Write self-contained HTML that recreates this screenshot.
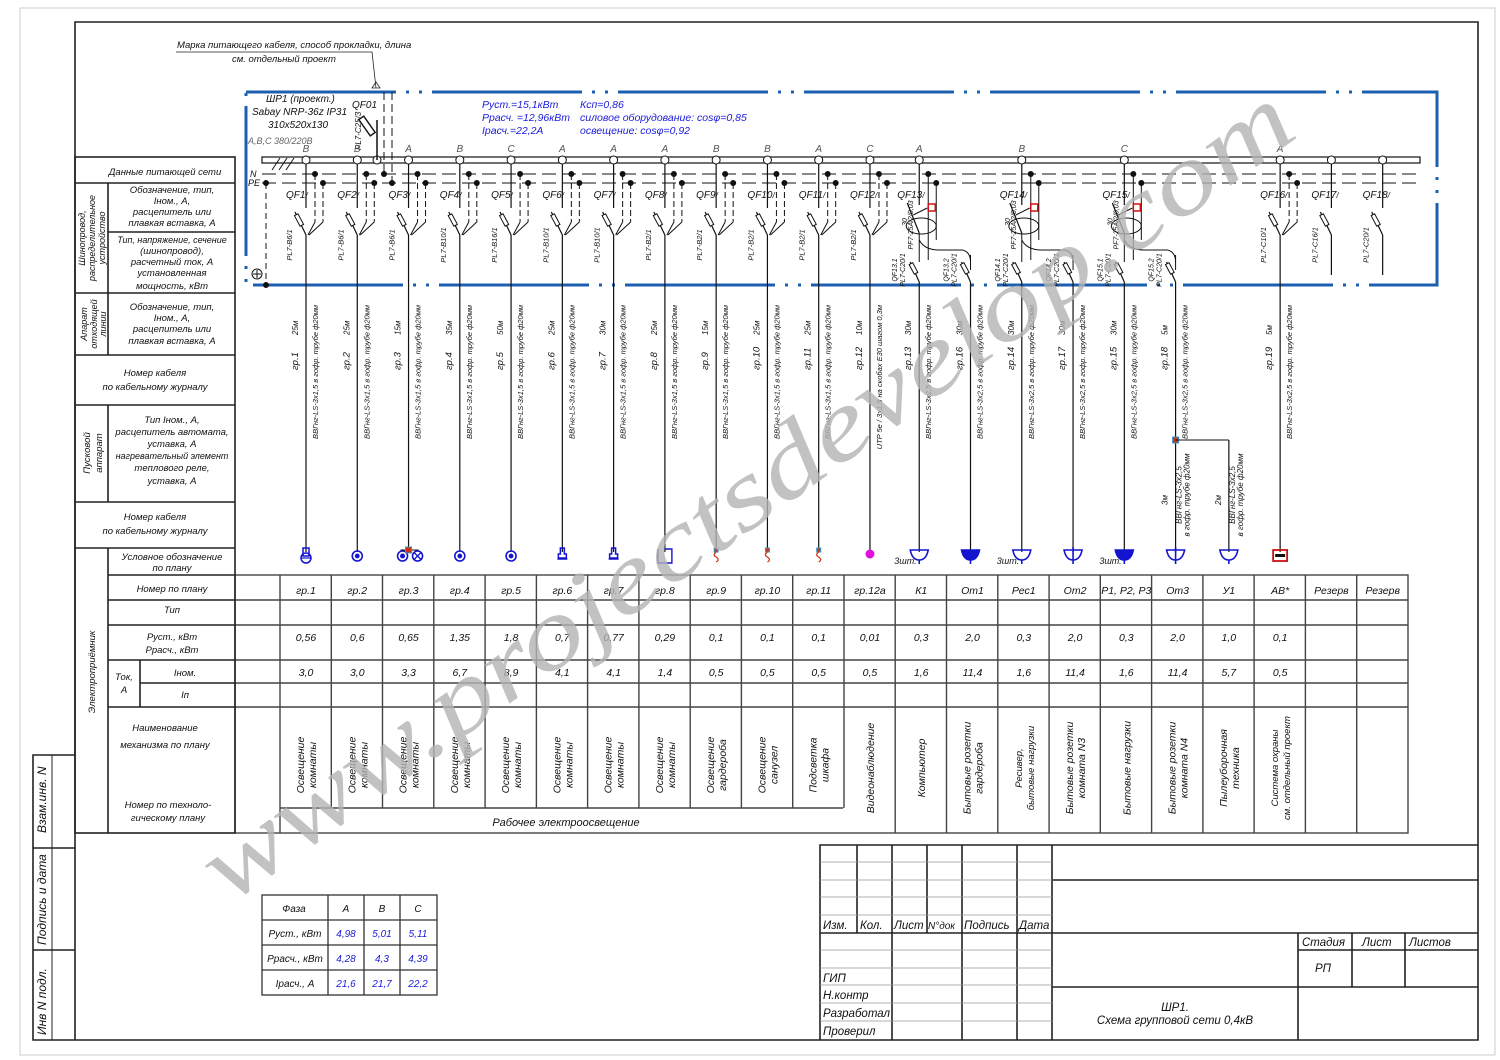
<!DOCTYPE html>
<html><head><meta charset="utf-8">
<style>
html,body{margin:0;padding:0;background:#fff;}
svg{display:block;}
text{font-family:"Liberation Sans Narrow","Liberation Sans",sans-serif;font-style:italic;fill:#111;}
</style></head>
<body>
<svg id="s" width="1500" height="1060" viewBox="0 0 1500 1060" xmlns="http://www.w3.org/2000/svg">
<rect x="0" y="0" width="1500" height="1060" fill="#fff"/>
<rect x="20" y="8" width="1475" height="1047" fill="none" stroke="#ccc" stroke-width="1"/>
<g fill="none" stroke="#222" stroke-width="1.6">
<polyline points="75,1040 75,22 1478,22 1478,1040 33,1040 33,755 75,755"/>
<line x1="52" y1="755" x2="52" y2="1040" stroke-width="1"/>
<line x1="33" y1="848" x2="75" y2="848"/>
<line x1="33" y1="950" x2="75" y2="950"/>
</g>
<text transform="translate(46,833) rotate(-90)" font-size="12">Взам.инв. N</text>
<text transform="translate(46,945) rotate(-90)" font-size="12">Подпись и дата</text>
<text transform="translate(46,1035) rotate(-90)" font-size="12">Инв N подл.</text>

<text x="177" y="48" font-size="9.5">Марка питающего кабеля, способ прокладки, длина</text>
<text x="232" y="62" font-size="9.5">см. отдельный проект</text>
<polyline points="176,52 372,52 376,88" fill="none" stroke="#222" stroke-width="0.8"/>
<polygon points="372,88 380,88 376,82" fill="none" stroke="#222" stroke-width="0.8"/>

<rect x="246" y="92" width="1191" height="193" fill="none" stroke="#1c5fb0" stroke-width="3" stroke-dasharray="150 10 3 10 3 10"/>

<text x="266" y="102" font-size="10">ШР1 (проект.)</text>
<text x="252" y="115" font-size="10">Sabay NRP-36z IP31</text>
<text x="268" y="128" font-size="10">310x520x130</text>
<text x="248" y="144" font-size="9" style="fill:#666">A,B,C 380/220В</text>
<text x="352" y="108" font-size="10">QF01</text>
<text transform="translate(361,150) rotate(-90)" font-size="8">PL7-C25/3</text>
<g font-size="10.5">
<text x="482" y="108" style="fill:#1a1adc">Руст.=15,1кВт</text>
<text x="482" y="121" style="fill:#1a1adc">Ррасч. =12,96кВт</text>
<text x="482" y="134" style="fill:#1a1adc">Iрасч.=22,2А</text>
<text x="580" y="108" style="fill:#1a1adc">Ксп=0,86</text>
<text x="580" y="121" style="fill:#1a1adc">силовое оборудование: cosφ=0,85</text>
<text x="580" y="134" style="fill:#1a1adc">освещение: cosφ=0,92</text>
</g>
<text x="250" y="177" font-size="9">N</text>
<text x="248" y="186" font-size="9">PE</text>
<g id="dyn"></g>

<g fill="none" stroke="#222" stroke-width="1.6">
<rect x="75" y="157" width="160" height="676"/>
<line x1="75" y1="183" x2="235" y2="183"/>
<line x1="108" y1="232" x2="235" y2="232"/>
<line x1="75" y1="293" x2="235" y2="293"/>
<line x1="75" y1="355" x2="235" y2="355"/>
<line x1="75" y1="405" x2="235" y2="405"/>
<line x1="75" y1="502" x2="235" y2="502"/>
<line x1="75" y1="548" x2="235" y2="548"/>
<line x1="108" y1="575" x2="235" y2="575"/>
<line x1="108" y1="600" x2="235" y2="600"/>
<line x1="108" y1="625" x2="235" y2="625"/>
<line x1="108" y1="660" x2="235" y2="660"/>
<line x1="140" y1="683" x2="235" y2="683"/>
<line x1="108" y1="707" x2="235" y2="707"/>
<line x1="108" y1="183" x2="108" y2="355"/>
<line x1="108" y1="405" x2="108" y2="502"/>
<line x1="108" y1="548" x2="108" y2="833"/>
<line x1="140" y1="660" x2="140" y2="707"/>
</g>
<g font-size="9.5" text-anchor="middle">
<text x="165" y="175">Данные питающей сети</text>
<text x="172" y="193">Обозначение, тип,</text><text x="172" y="204">Iном., А,</text><text x="172" y="215">расцепитель или</text><text x="172" y="226">плавкая вставка, А</text>
<text x="172" y="243" font-size="9">Тип, напряжение, сечение</text><text x="172" y="254">(шинопровод),</text><text x="172" y="265">расчетный ток, А</text><text x="172" y="276">установленная</text><text x="172" y="289">мощность, кВт</text>
<text x="172" y="310">Обозначение, тип,</text><text x="172" y="321">Iном., А,</text><text x="172" y="332">расцепитель или</text><text x="172" y="344">плавкая вставка, А</text>
<text x="155" y="376">Номер кабеля</text><text x="155" y="390">по кабельному журналу</text>
<text x="172" y="423">Тип  Iном., А,</text><text x="172" y="435">расцепитель  автомата,</text><text x="172" y="447">уставка, А</text><text x="172" y="459" font-size="9">нагревательный элемент</text><text x="172" y="471">теплового реле,</text><text x="172" y="484">уставка, А</text>
<text x="155" y="520">Номер кабеля</text><text x="155" y="534">по кабельному журналу</text>
<text x="172" y="560">Условное обозначение</text><text x="172" y="571">по плану</text>
<text x="172" y="592">Номер по плану</text>
<text x="172" y="613">Тип</text>
<text x="172" y="640">Руст., кВт</text><text x="172" y="653">Ррасч., кВт</text>
<text x="124" y="680">Ток,</text><text x="124" y="693">А</text>
<text x="185" y="676">Iном.</text><text x="185" y="698">Iп</text>
<text x="165" y="731">Наименование</text><text x="165" y="748">механизма по плану</text>
<text x="168" y="808">Номер по техноло-</text><text x="168" y="821">гическому плану</text>
<text transform="translate(85,238) rotate(-90)" font-size="9">Шинопровод,</text>
<text transform="translate(95,238) rotate(-90)" font-size="9">распределительное</text>
<text transform="translate(105,238) rotate(-90)" font-size="9">устройство</text>
<text transform="translate(87,324) rotate(-90)" font-size="9">Апарат</text>
<text transform="translate(97,324) rotate(-90)" font-size="9">отходящей</text>
<text transform="translate(106,324) rotate(-90)" font-size="9">линии</text>
<text transform="translate(90,453) rotate(-90)">Пусковой</text>
<text transform="translate(102,453) rotate(-90)">аппарат</text>
<text transform="translate(95,672) rotate(-90)">Электроприёмник</text>
</g>

<g fill="none" stroke="#333" stroke-width="1.3">
<rect x="262" y="895" width="175" height="100"/>
<line x1="262" y1="920" x2="437" y2="920"/><line x1="262" y1="945" x2="437" y2="945"/><line x1="262" y1="970" x2="437" y2="970"/>
<line x1="328" y1="895" x2="328" y2="995"/><line x1="364" y1="895" x2="364" y2="995"/><line x1="400" y1="895" x2="400" y2="995"/>
</g>
<g font-size="10" text-anchor="middle">
<text x="294" y="912">Фаза</text><text x="346" y="912">A</text><text x="382" y="912">B</text><text x="418" y="912">C</text>
<text x="295" y="937">Руст., кВт</text><text x="295" y="962">Ррасч., кВт</text><text x="295" y="987">Iрасч., А</text>
<text x="346" y="937" style="fill:#1a1adc">4,98</text><text x="382" y="937" style="fill:#1a1adc">5,01</text><text x="418" y="937" style="fill:#1a1adc">5,11</text>
<text x="346" y="962" style="fill:#1a1adc">4,28</text><text x="382" y="962" style="fill:#1a1adc">4,3</text><text x="418" y="962" style="fill:#1a1adc">4,39</text>
<text x="346" y="987" style="fill:#1a1adc">21,6</text><text x="382" y="987" style="fill:#1a1adc">21,7</text><text x="418" y="987" style="fill:#1a1adc">22,2</text>
</g>

<g fill="none" stroke="#222" stroke-width="1.6">
<polyline points="820,1040 820,845 1478,845"/>
<line x1="1052" y1="845" x2="1052" y2="1040"/>
<line x1="1052" y1="880" x2="1478" y2="880"/>
<line x1="820" y1="933" x2="1478" y2="933"/>
<line x1="1052" y1="987" x2="1478" y2="987"/>
<line x1="1298" y1="933" x2="1298" y2="1040"/>
<line x1="1298" y1="950" x2="1478" y2="950"/>
<line x1="1352" y1="933" x2="1352" y2="987"/>
<line x1="1405" y1="933" x2="1405" y2="987"/>
<line x1="857" y1="845" x2="857" y2="933"/>
<line x1="892" y1="845" x2="892" y2="1040"/>
<line x1="927" y1="845" x2="927" y2="933"/>
<line x1="962" y1="845" x2="962" y2="1040"/>
<line x1="1017" y1="845" x2="1017" y2="1040"/>
</g>
<g stroke="#999" stroke-width="0.8">
<line x1="820" y1="862" x2="1052" y2="862"/><line x1="820" y1="880" x2="1052" y2="880"/><line x1="820" y1="897" x2="1052" y2="897"/><line x1="820" y1="915" x2="1052" y2="915"/>
<line x1="820" y1="950" x2="1052" y2="950"/><line x1="820" y1="968" x2="1052" y2="968"/><line x1="820" y1="985" x2="1052" y2="985"/><line x1="820" y1="1003" x2="1052" y2="1003"/><line x1="820" y1="1021" x2="1052" y2="1021"/>
</g>
<g font-size="11.5">
<text x="823" y="929">Изм.</text><text x="860" y="929">Кол.</text><text x="894" y="929">Лист</text><text x="928" y="929" font-size="10">N°док</text><text x="964" y="929">Подпись</text><text x="1019" y="929">Дата</text>
<text x="823" y="982">ГИП</text><text x="823" y="999">Н.контр</text><text x="823" y="1017">Разработал</text><text x="823" y="1035">Проверил</text>
<text x="1302" y="946">Стадия</text><text x="1362" y="946">Лист</text><text x="1409" y="946">Листов</text>
<text x="1315" y="972">РП</text>
<text x="1175" y="1011" text-anchor="middle">ШР1.</text>
<text x="1175" y="1024" text-anchor="middle">Схема групповой сети 0,4кВ</text>
</g>

<text transform="translate(765,520) rotate(-35.7)" text-anchor="middle" font-size="100" textLength="1320" lengthAdjust="spacingAndGlyphs" style="font-family:'Liberation Serif',serif;font-style:italic;fill:#b4b4b4;opacity:0.8">www.projectsdevelop.com</text>
</svg>
<script>
(function(){
var g=document.getElementById('dyn');
var h='';
function L(a,b,c,d,s,w,da){h+='<line x1="'+a+'" y1="'+b+'" x2="'+c+'" y2="'+d+'" stroke="'+(s||'#111')+'" stroke-width="'+(w||1)+'"'+(da?' stroke-dasharray="'+da+'"':'')+'/>';}
function T(x,y,t,fs,rot,anc,col){h+='<text '+(rot?'transform="translate('+x+','+y+') rotate(-90)"':'x="'+x+'" y="'+y+'"')+' font-size="'+(fs||10)+'"'+(anc?' text-anchor="'+anc+'"':'')+(col?' style="fill:'+col+'"':'')+'>'+t+'</text>';}
function C(x,y,r,f,s,w){h+='<circle cx="'+x+'" cy="'+y+'" r="'+r+'" fill="'+(f||'#fff')+'" stroke="'+(s||'#111')+'" stroke-width="'+(w||1)+'"/>';}
function X(x){return 306+51.27*x;}
h+='<rect x="262" y="157" width="1158" height="6" fill="#fff" stroke="#111" stroke-width="1.2"/>';
L(262,174,1420,174,'#111',1,'14 6');L(262,183,1420,183,'#111',1,'14 6');
L(266,183,266,285,'#111',1,'6 4');C(266,183,2.5,'#111');C(266,285,2.5,'#111');C(257,274,5,'#fff','#111',1);L(253,274,261,274);L(257,270,257,278);
L(272,170,280,158);L(279,170,287,158);L(286,170,294,158);
C(377,160,4);L(377,160,377,120,'#111',1.5);h+='<rect x="364" y="116" width="6" height="20" transform="rotate(-35 367 126)" fill="#fff" stroke="#111" stroke-width="1.4"/>';
L(384,92,384,174,'#111',1,'8 4');L(392,92,392,183,'#111',1,'8 4');C(384,174,2.5,'#111');C(392,183,2.5,'#111');
var ph=['B','B','A','B','C','A','A','A','B','B','A','C'];
function breaker(x,qf,br,np){
 C(x,160,4);L(x,164,x,208,'#111',1.2);
 L(x-11,212,x,235,'#111',1.2);h+='<rect x="'+(x-9)+'" y="214" width="4" height="12" transform="rotate(-28 '+(x-7)+' 220)" fill="#fff" stroke="#111"/>';
 if(np){L(x+9,174,x+9,222,'#111',1,'6 3');L(x+9,222,x+2,235);L(x+17,183,x+17,222,'#111',1,'6 3');L(x+17,222,x+3,235);C(x+9,174,2.5,'#111');C(x+17,183,2.5,'#111');}
 T(x-20,198,qf+'<tspan font-size="8">/</tspan>',10);T(x-14,245,br,7.5,1,'middle');
}
var brs=['PL7-B6/1','PL7-B6/1','PL7-B6/1','PL7-B10/1','PL7-B16/1','PL7-B10/1','PL7-B10/1','PL7-B2/1','PL7-B2/1','PL7-B2/1','PL7-B2/1','PL7-B2/1'];
for(var i=0;i<12;i++){var x=X(i);T(x,152,ph[i],10,0,'middle','#555');breaker(x,'QF'+(i+1),brs[i],1);L(x,235,x,552,'#111',1.2);}
var rc=[[12,'QF13','A'],[14,'QF14','B'],[16,'QF15','C']];
rc.forEach(function(r){var x=X(r[0])-2,x2=X(r[0]+1);T(x,152,r[2],10,0,'middle','#555');C(x,160,4);L(x,164,x,205,'#111',1.2);L(x-12,203,x,233,'#111',1.2);
 L(x+9,174,x+9,260,'#111',1);C(x+9,174,2.5,'#111');L(x+17,183,x+17,240,'#111',1);C(x+17,183,2.5,'#111');
 h+='<ellipse cx="'+(x+2)+'" cy="226" rx="15" ry="8" fill="none" stroke="#111"/>';
 L(x-6,215,x+8,208,'#111',1);h+='<rect x="'+(x+9)+'" y="204" width="7" height="7" fill="none" stroke="#d01010" stroke-width="1.5"/>';
 h+='<path d="M'+x+' 233 L'+x+' 255 M'+x+' 240 Q'+(x+5)+' 250 '+(x+20)+' 250 L'+(x2-10)+' 250 Q'+(x2-2)+' 252 '+(x2-2)+' 262 L'+(x2-2)+' 270" fill="none" stroke="#111"/>';
 T(x-22,198,r[1]+'<tspan font-size="8">/</tspan>',10);T(x-12,222,'30',7,1,'middle');T(x-6,225,'PF7-25A/2/0,03',7,1,'middle');
 [x,x2-2].forEach(function(xx,j){L(xx,255,xx,262);L(xx-9,262,xx,282,'#111',1.2);h+='<rect x="'+(xx-8)+'" y="263" width="4" height="11" transform="rotate(-28 '+(xx-6)+' 268)" fill="#fff" stroke="#111"/>';L(xx,282,xx,552,'#111',1.2);
  T(xx-22,270,r[1]+'.'+(j+1),7,1,'middle');T(xx-14,270,'PL7-C20/1',7,1,'middle');});
});
[[19,'QF16','PL7-C10/1',1],[20,'QF17','PL7-C16/1',0],[21,'QF18','PL7-C20/1',0]].forEach(function(r){var x=X(r[0]);if(r[0]==19)T(x,152,'A',10,0,'middle','#555');breaker(x,r[1],r[2],r[3]);if(r[0]==19)L(x,235,x,552,'#111',1.2);else L(x,235,x,275,'#111',1.2);});
var xb=X(17)-2,xb2=X(18);h+='<rect x="'+(xb-3)+'" y="437" width="6" height="6" fill="#d03010" stroke="#39c"/>';L(xb,440,xb2,440);L(xb2,440,xb2,552,'#111',1.2);
T(xb-8,500,'3м',8,1,'middle');T(xb+6,495,'ВВГнг-LS-3х2,5',8,1,'middle');T(xb+14,495,'в гофр. трубе ф20мм',8,1,'middle');
T(xb2-8,500,'2м',8,1,'middle');T(xb2+6,495,'ВВГнг-LS-3х2,5',8,1,'middle');T(xb2+14,495,'в гофр. трубе ф20мм',8,1,'middle');
var grs=['гр.1','гр.2','гр.3','гр.4','гр.5','гр.6','гр.7','гр.8','гр.9','гр.10','гр.11','гр.12','гр.13','гр.16','гр.14','гр.17','гр.15','гр.18','','гр.19'];
var lens=['25м','25м','15м','35м','50м','25м','30м','25м','15м','25м','25м','10м','30м','30м','30м','30м','30м','5м','','5м'];
for(var i=0;i<20;i++){if(!grs[i])continue;var x=X(i)-(i>=12&&i<18?2:0);
 var cab=i<12?'ВВГнг-LS-3х1,5 в гофр. трубе ф20мм':'ВВГнг-LS-3х2,5 в гофр. трубе ф20мм';if(i==11)cab='UTP 5e / 3х1,5 на скобах Е30 шагом 0,3м';
 T(x+12,305,cab,7.5,1,'end');T(x-8,370,grs[i],9.5,1,'start');T(x-8,335,lens[i],8,1,'start');}
var B='#1414d0';
function sym(i,x){var y=556;
 if(i==0){h+='<rect x="'+(x-3)+'" y="'+(y-8)+'" width="6" height="8" fill="none" stroke="'+B+'" stroke-width="1.5"/>';C(x,y+2,5,'none',B,1.5);L(x-5,y+2,x+5,y+2,B,1.2);}
 else if(i==1||i==3||i==4){C(x,y,5,'none',B,1.6);C(x,y,2.2,B,B,0.5);}
 else if(i==2){C(x-6,y,5,'none',B,1.6);C(x-6,y,2,B,B);C(x+9,y,5,'none',B,1.6);L(x+5.5,y-3.5,x+12.5,y+3.5,B,1.3);L(x+5.5,y+3.5,x+12.5,y-3.5,B,1.3);L(x-8,y-6,x+10,y-6);h+='<rect x="'+(x-3)+'" y="'+(y-9)+'" width="6" height="6" fill="#d03010" stroke="#39c"/>';}
 else if(i==5||i==6){h+='<path d="M'+(x-2)+' '+(y-8)+' h4 v6 h2 v4 h-8 v-4 h2z" fill="none" stroke="'+B+'" stroke-width="1.5"/>';L(x-5,y+3,x+5,y+3,B,1.5);}
 else if(i==7){h+='<path d="M'+x+' '+(y-7)+' h7 v14 h-14 v-14" fill="none" stroke="'+B+'" stroke-width="1.4"/>';}
 else if(i>=8&&i<=10){h+='<rect x="'+(x-2)+'" y="'+(y-8)+'" width="4" height="4" fill="#d03010" stroke="#39c"/><path d="M'+x+' '+(y-4)+' q-4 3 0 5 q4 3 0 5" fill="none" stroke="#d03010" stroke-width="1.2"/>';}
 else if(i==11){C(x,y-2,4,'#e010e0','#e010e0');}
 else if(i>=12&&i<=18){var f=(i==13||i==16)?B:'none';h+='<path d="M'+(x-9)+' '+(y-6)+' h18 q-2 10 -9 10 q-7 0 -9 -10z" fill="'+f+'" stroke="'+B+'" stroke-width="1.6"/>';L(x,y+4,x,y+8,B,1.6);if(i==15||i==17)L(x,y-9,x,y+4,B,1.6);if(i==12||i==14||i==16)T(x-25,y+8,'3шт.',9);}
 else if(i==19){h+='<rect x="'+(x-7)+'" y="'+(y-6)+'" width="14" height="11" fill="none" stroke="#d01010" stroke-width="1.8"/>';h+='<rect x="'+(x-5)+'" y="'+(y-2)+'" width="10" height="3" fill="#111"/>';}
}
for(var i=0;i<20;i++){sym(i,X(i)-(i>=12&&i<18?2:0));}
h+='<g fill="none" stroke="#444" stroke-width="1.4">';
h+='<rect x="235" y="575" width="1173" height="258"/>';
[600,625,660,683,707].forEach(function(y){h+='<line x1="235" y1="'+y+'" x2="1408" y2="'+y+'"/>';});
h+='<line x1="280" y1="808" x2="843" y2="808"/>';
for(var c=0;c<22;c++){var x=280+51.27*c;var yb=(c>0&&c<=11)?808:833;h+='<line x1="'+x.toFixed(1)+'" y1="575" x2="'+x.toFixed(1)+'" y2="'+yb+'"/>';}
h+='</g>';
var num=['гр.1','гр.2','гр.3','гр.4','гр.5','гр.6','гр.7','гр.8','гр.9','гр.10','гр.11','гр.12а','К1','От1','Рес1','От2','Р1, Р2, Р3','От3','У1','АВ*','Резерв','Резерв'];
var P=['0,56','0,6','0,65','1,35','1,8','0,7','0,77','0,29','0,1','0,1','0,1','0,01','0,3','2,0','0,3','2,0','0,3','2,0','1,0','0,1','',''];
var I=['3,0','3,0','3,3','6,7','8,9','4,1','4,1','1,4','0,5','0,5','0,5','0,5','1,6','11,4','1,6','11,4','1,6','11,4','5,7','0,5','',''];
var N=[['Освещение','комнаты'],['Освещение','комнаты'],['Освещение','комнаты'],['Освещение','комнаты'],['Освещение','комнаты'],['Освещение','комнаты'],['Освещение','комнаты'],['Освещение','комнаты'],['Освещение','гардероба'],['Освещение','санузел'],['Подсветка','шкафа'],['Видеонаблюдение'],['Компьютер'],['Бытовые розетки','гардероба'],['Ресивер,','бытовые нагрузки'],['Бытовые розетки','комната N3'],['Бытовые нагрузки'],['Бытовые розетки','комната N4'],['Пылеуборочная','техника'],['Система охраны','см. отдельный проект']];
for(var c=0;c<22;c++){var x=X(c);T(x,594,num[c],10.5,0,'middle');if(P[c])T(x,641,P[c],10.5,0,'middle');if(I[c])T(x,676,I[c],10.5,0,'middle');
 if(N[c]){var n=N[c];var yc=c<11?765:768;var fs=n[1]&&n[1].length>14?9.5:10.5;if(n.length==1)T(x+4,yc,n[0],10.5,1,'middle');else{T(x-2,yc,n[0],fs,1,'middle');T(x+10,yc,n[1],fs,1,'middle');}}}
T(566,826,'Рабочее электроосвещение',11,0,'middle');
g.innerHTML=h;
})();
</script>
</body></html>
